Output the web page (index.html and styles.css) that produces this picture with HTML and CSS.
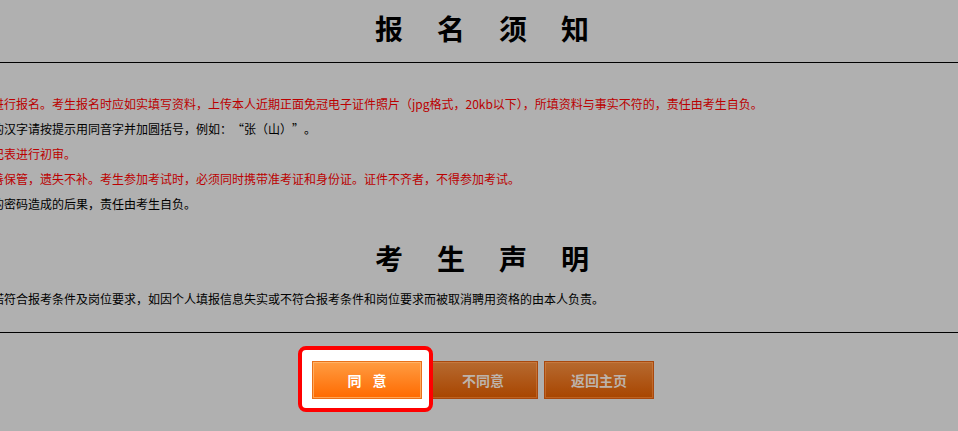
FILE: index.html
```html
<!DOCTYPE html>
<html>
  <head>
    <meta charset="utf-8" />
    <link rel="stylesheet" href="styles.css">
  </head>
  <body>
    <div class="head">
      <h2 class="title">报名须知</h2>
    </div>

    <div class="notes">
      <p class="red">进行报名。考生报名时应如实填写资料，上传本人近期正面免冠电子证件照片（jpg格式，20kb以下），所填资料与事实不符的，责任由考生自负。</p>
      <p>的汉字请按提示用同音字并加圆括号，例如：<span class="q q-open">“</span>张（山）<span class="q">”</span>。</p>
      <p class="red">记表进行初审。</p>
      <p class="red">善保管，遗失不补。考生参加考试时，必须同时携带准考证和身份证。证件不齐者，不得参加考试。</p>
      <p>的密码造成的后果，责任由考生自负。</p>
    </div>

    <div class="statement">
      <h2 class="title title-sub">考生声明</h2>
      <p class="pledge">诺符合报考条件及岗位要求，如因个人填报信息失实或不符合报考条件和岗位要求而被取消聘用资格的由本人负责。</p>
    </div>

    <div class="actions">
      <span class="spot"><button class="btn btn-on">同意</button></span>
      <button class="btn">不同意</button>
      <button class="btn">返回主页</button>
    </div>
  </body>
</html>
```

FILE: styles.css
```css
body {
  margin: 0;
  min-height: 431px;
  background: #b0b0b0;
  font-family: "Noto Sans CJK SC", sans-serif;
  font-size: 12px;
  color: #000;
  overflow: hidden;
}

.head {
  height: 62px;
  border-bottom: 1px solid #000;
}

.title {
  margin: 0;
  font-size: 28px;
  font-weight: bold;
  line-height: 56px;
  letter-spacing: 34px;
  text-align: center;
  text-indent: 40px;
}

.title-sub {
  margin-top: 14px;
}

.notes {
  margin: 28px 0 0 -8px;
  line-height: 25px;
}

.notes p,
.pledge {
  margin: 0;
  white-space: nowrap;
}

.red {
  color: #bb0000;
}

.q {
  display: inline-block;
  width: 12px;
}

.q-open {
  text-align: right;
}

.statement {
  border-bottom: 1px solid #000;
  padding-bottom: 21px;
}

.pledge {
  margin-left: -8px;
  line-height: 25px;
}

.actions {
  display: flex;
  justify-content: center;
  gap: 6px;
  padding: 28px 0 32px 8px;
}

.btn {
  width: 110px;
  height: 38px;
  padding: 0;
  border: 1px solid #a8480e;
  background: linear-gradient(#b66a30, #a84500);
  box-shadow: inset 0 0 0 1px rgba(230, 150, 90, 0.35);
  color: #bdb3ab;
  font-family: "Noto Sans CJK SC", sans-serif;
  font-size: 14px;
  font-weight: bold;
}

.spot {
  position: relative;
  z-index: 1;
  display: flex;
}

.spot::before {
  content: "";
  position: absolute;
  top: -15px;
  left: -14px;
  right: -11px;
  bottom: -13px;
  background: #fff;
  border: 4px solid #ff0000;
  border-radius: 8px;
  z-index: -1;
}

.btn-on {
  border-color: #e8701a;
  background: linear-gradient(#ff9c42, #ff6a00);
  box-shadow: inset 0 0 0 1px rgba(255, 190, 120, 0.7);
  color: #fff;
  letter-spacing: 11px;
  text-indent: 11px;
}
```
